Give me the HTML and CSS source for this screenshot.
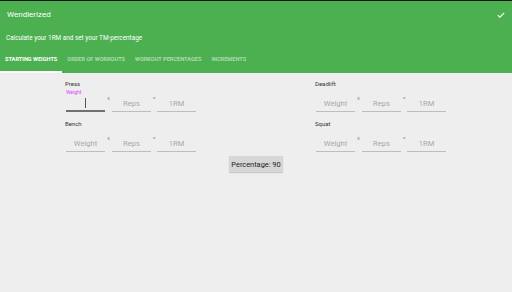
FILE: index.html
```html
<!DOCTYPE html>
<html lang="en">
<head>
  <meta charset="UTF-8" />
  <title>Wendlerized</title>
  <link rel="stylesheet" href="styles.css">
</head>
<body>
  <div class="statusbar"></div>
  <header class="appbar">
    <div class="titlerow">
      <span class="title">Wendlerized</span>
      <svg class="check" width="8" height="6" viewBox="0 0 8 6">
        <path d="M0.8 3.2 L2.9 5.2 L7.2 0.8" fill="none" stroke="#fff" stroke-width="1.1"/>
      </svg>
    </div>
    <div class="subtitle">Calculate your 1RM and set your TM-percentage</div>
    <nav class="tabs">
      <span class="tab active">Starting weights</span>
      <span class="tab">Order of workouts</span>
      <span class="tab">Workout percentages</span>
      <span class="tab">Increments</span>
    </nav>
  </header>

  <main class="content">
    <div class="columns">
      <div class="column">
        <div class="group">
          <div class="label">Press</div>
          <div class="fields">
            <div class="field focused"><span class="float">Weight</span><span class="cursor"></span></div>
            <span class="op">x</span>
            <div class="field">Reps</div>
            <span class="op eq">=</span>
            <div class="field">1RM</div>
          </div>
        </div>
        <div class="group">
          <div class="label">Bench</div>
          <div class="fields">
            <div class="field">Weight</div>
            <span class="op">x</span>
            <div class="field">Reps</div>
            <span class="op eq">=</span>
            <div class="field">1RM</div>
          </div>
        </div>
      </div>
      <div class="column">
        <div class="group">
          <div class="label">Deadlift</div>
          <div class="fields">
            <div class="field">Weight</div>
            <span class="op">x</span>
            <div class="field">Reps</div>
            <span class="op eq">=</span>
            <div class="field">1RM</div>
          </div>
        </div>
        <div class="group">
          <div class="label">Squat</div>
          <div class="fields">
            <div class="field">Weight</div>
            <span class="op">x</span>
            <div class="field">Reps</div>
            <span class="op eq">=</span>
            <div class="field">1RM</div>
          </div>
        </div>
      </div>
    </div>
    <div class="actions">
      <button class="percent">Percentage: 90</button>
    </div>
  </main>
</body>
</html>
```

FILE: styles.css
```css
* {
  box-sizing: border-box;
}
body {
  margin: 0;
  width: 512px;
  height: 292px;
  background: #eeeeee;
  font-family: Roboto, "Liberation Sans", sans-serif;
  overflow: hidden;
}
.statusbar {
  height: 1px;
  background: #111;
}
.appbar {
  background: #4caf50;
  color: #fff;
  height: 72px;
  display: flex;
  flex-direction: column;
}
.titlerow {
  height: 27px;
  display: flex;
  align-items: center;
  justify-content: space-between;
  padding: 0 7px 0 7px;
}
.title {
  font-size: 8px;
}
.check {
  display: block;
}
.subtitle {
  height: 20px;
  font-size: 6.4px;
  padding-left: 6px;
  line-height: 20px;
}
.tabs {
  display: flex;
  height: 25px;
  margin-top: auto;
}
.tab {
  font-size: 5.6px;
  font-weight: bold;
  text-transform: uppercase;
  padding: 0 5px;
  line-height: 23px;
  color: rgba(255, 255, 255, 0.55);
  border-bottom: 2px solid transparent;
}
.tab.active {
  color: #fff;
  border-bottom-color: #fff;
}
.content {
  padding-top: 7px;
}
.columns {
  display: flex;
  padding-left: 65px;
}
.column {
  flex: none;
  width: 250px;
}
.column + .column {
  flex: 1;
  width: auto;
}
.group {
  margin-bottom: 8px;
}
.label {
  font-size: 6px;
  line-height: 8px;
  color: #333;
}
.fields {
  display: flex;
  padding-left: 1px;
  height: 24px;
}
.field {
  position: relative;
  width: 39px;
  height: 24px;
  border-bottom: 1px solid #bdbdbd;
  color: #a8a8a8;
  font-size: 7.6px;
  text-align: center;
  padding-top: 11px;
}
.field.focused {
  border-bottom: 2px solid #707070;
}
.float {
  position: absolute;
  left: 0;
  top: 1px;
  font-size: 5px;
  color: #e040fb;
}
.cursor {
  position: absolute;
  left: 19px;
  top: 10px;
  width: 1px;
  height: 10px;
  background: #555;
}
.op {
  width: 7px;
  font-size: 5px;
  color: #888;
  text-align: center;
  padding-top: 7px;
}
.op.eq {
  width: 6px;
}
.actions {
  display: flex;
  justify-content: center;
  margin-top: -4px;
}
.percent {
  width: 54px;
  height: 16px;
  padding: 0;
  border: none;
  background: #d6d6d6;
  color: #222;
  font-family: Roboto, "Liberation Sans", sans-serif;
  font-size: 7.4px;
  box-shadow: 0 1px 1px rgba(0, 0, 0, 0.15);
}
```
